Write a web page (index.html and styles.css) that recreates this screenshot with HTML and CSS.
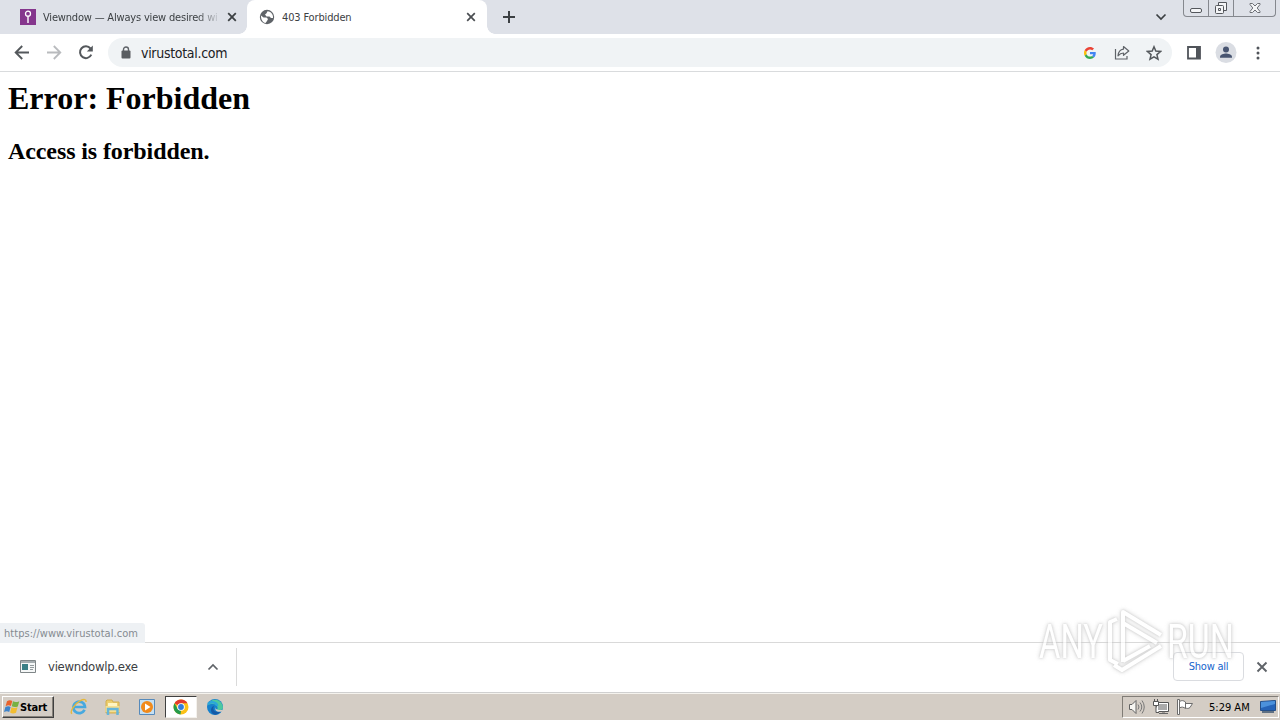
FILE: index.html
```html
<!DOCTYPE html>
<html lang="en">
<head>
<meta charset="UTF-8">
<title>403 Forbidden</title>
<link rel="stylesheet" href="styles.css">
</head>
<body>
<div class="screen">
    <div class="tabstrip">
        <div class="tab">
            <svg class="favicon" width="16" height="16"><path fill="#85368d" d="M0 0h16v16H0z"/><circle cx="8" cy="4.7" r="2.5" fill="none" stroke="#fff" stroke-width="1.3"/><path stroke="#fff" stroke-width="1.4" d="M8 7v7"/></svg>
            <span class="tab-title fade"><span class="t1">Viewndow — Always view desired wi</span></span>
            <svg class="tab-close" width="10" height="10"><path d="M1.2 1.2l7.6 7.6M8.8 1.2L1.2 8.8" stroke="#3c4043" stroke-width="1.8"/></svg>
        </div>
        <div class="tab active">
            <svg class="favicon" width="16" height="16" viewBox="0 0 16 16"><circle cx="8" cy="8" r="7.2" fill="#5f6368"/><path fill="#fff" d="M2 6.500L4.500 8.500h3l1.500 1.500-1 2-1.500 2C3.800 13.500 1.800 10.500 2 6.500zM8.500 2.200l-1 2L6 5.500l1.500 2h3L12 9h2c.5-3-1.500-6.300-5.500-6.800z"/></svg>
            <span class="tab-title t2">403 Forbidden</span>
            <svg class="tab-close" width="10" height="10"><path d="M1.2 1.2l7.6 7.6M8.8 1.2L1.2 8.8" stroke="#4a4d51" stroke-width="1.7"/></svg>
        </div>
        <svg class="new-tab" width="14" height="14"><path d="M7 1v12M1 7h12" stroke="#3c4043" stroke-width="2"/></svg>
        <svg class="tab-search" width="12" height="8"><path d="M1.5 1.5L6 6l4.5-4.5" fill="none" stroke="#3c4043" stroke-width="1.7"/></svg>
        <div class="window-buttons">
            <span><svg width="14" height="14"><rect x="1.500" y="7.500" width="11" height="4" rx="1.500" fill="#f4f5f7" stroke="#54575c"/></svg></span>
            <span><svg width="14" height="14"><g fill="#f4f5f7" stroke="#54575c"><path d="M4.500 1.500h8v8h-8z"/><rect x="1.500" y="4.500" width="8" height="8" rx="1"/><path d="M4.500 7.500h2v2h-2z"/></g></svg></span>
            <span><svg width="14" height="14"><path d="M2 2.500h2.500L7 5l2.500-2.500H12v1L9.200 7l2.800 3.500v1H9.500L7 9l-2.500 2.500H2v-1L4.800 7 2 3.500z" fill="#f4f5f7" stroke="#6c6f75"/></svg></span>
        </div>
    </div>

    <div class="toolbar">
        <svg class="nav" width="16" height="16"><path d="M15 7.500H2M8.200 1L1.700 7.500l6.500 6.500" fill="none" stroke="#54585c" stroke-width="1.900"/></svg>
        <svg class="nav" width="16" height="16"><path d="M1 7.500h13M7.800 1l6.500 6.500-6.500 6.500" fill="none" stroke="#b9bbbe" stroke-width="1.800"/></svg>
        <svg class="nav" width="16" height="16"><path d="M13.300 9.700A5.900 5.900 0 1 1 12.500 3.500" fill="none" stroke="#54585c" stroke-width="2"/><path d="M14.800 .5v6H8.800z" fill="#54585c"/></svg>
        <div class="omnibox">
            <svg class="lock" width="10" height="13"><path d="M2.500 6V3.500a2.500 2.500 0 0 1 5 0V6" fill="none" stroke="#5f6368" stroke-width="1.400"/><rect x="0.500" y="4.500" width="9" height="8" rx="1" fill="#5a5d61"/></svg>
            <span class="url">virustotal.com</span>
            <svg class="google" width="12" height="12" viewBox="0 0 48 48"><path fill="#EA4335" d="M24 9.500c3.540 0 6.710 1.220 9.210 3.600l6.850-6.850C35.900 2.380 30.470 0 24 0 14.620 0 6.510 5.380 2.560 13.220l7.980 6.190C12.430 13.720 17.740 9.500 24 9.500z"/><path fill="#4285F4" d="M46.980 24.550c0-1.570-.15-3.090-.38-4.550H24v9.020h12.940c-.58 2.960-2.260 5.480-4.780 7.180l7.730 6c4.510-4.180 7.090-10.360 7.090-17.650z"/><path fill="#FBBC05" d="M10.530 28.590c-.48-1.450-.76-2.990-.76-4.590s.27-3.140.76-4.590l-7.980-6.190C.92 16.460 0 20.120 0 24c0 3.880.92 7.540 2.560 10.780l7.970-6.190z"/><path fill="#34A853" d="M24 48c6.480 0 11.930-2.130 15.890-5.810l-7.730-6c-2.150 1.450-4.920 2.300-8.160 2.300-6.260 0-11.570-4.220-13.470-9.910l-7.980 6.190C6.510 42.620 14.620 48 24 48z"/></svg>
            <svg class="share" width="16" height="16"><g fill="none" stroke="#5f6368" stroke-width="1.200"><path d="M1.500 4v10h11.500V11"/><path d="M9.500 1.500l5.300 4.500-5.300 4.300V8C7 8 5.500 9 4 10.800 4.300 7 6.500 4.500 9.500 4.100z" stroke-linejoin="round"/></g></svg>
            <svg class="star" width="16" height="16"><path d="M8 1.800l1.800 4.300 4.700.4-3.600 3.100 1.100 4.600L8 11.800l-4 2.400 1.100-4.600-3.600-3.100 4.700-.4z" fill="none" stroke="#54585c" stroke-width="1.500"/></svg>
        </div>
        <svg class="panel" width="14" height="14"><path d="M1 1h12v11.500H1z" fill="#fff" stroke="#50545a" stroke-width="1.800"/><path d="M9 1H13v11.500H9z" fill="#50545a"/></svg>
        <svg class="avatar" width="22" height="22"><circle cx="11" cy="10.500" r="10.500" fill="#dadde3"/><circle cx="11" cy="7.500" r="3" fill="#485571"/><path d="M5 15.800v-1.200c0-2.200 4-3.200 6-3.200s6 1 6 3.200v1.200z" fill="#485571"/></svg>
        <svg class="menu" width="4" height="14"><g fill="#50545a"><circle cx="2" cy="2" r="1.500"/><circle cx="2" cy="7" r="1.500"/><circle cx="2" cy="12" r="1.500"/></g></svg>
    </div>

    <div class="page">
        <h1>Error: Forbidden</h1>
        <h2>Access is forbidden.</h2>
        <div class="status"><span>https://www.virustotal.com</span></div>
    </div>

    <div class="downloads">
        <div class="download">
            <svg width="16" height="13"><path d="M.5.500h15v12H.500z" fill="#f5f7f7" stroke="#7f8688"/><path d="M1 1h14v2H1z" fill="#a5adb0"/><path d="M2 4h6v6H2z" fill="#397f86"/><path d="M10 5.500h4M10 7.500h4M10 9.500h3" stroke="#929a9d"/></svg>
            <span class="filename">viewndowlp.exe</span>
            <svg class="up" width="12" height="8"><path d="M1.500 6.500L6 2l4.500 4.500" fill="none" stroke="#5f6368" stroke-width="1.700"/></svg>
        </div>
        <div class="show-all"><span>Show all</span></div>
        <svg class="shelf-close" width="12" height="12"><path d="M1.500 1.500l9 9M10.500 1.500l-9 9" stroke="#5f6368" stroke-width="1.900"/></svg>
    </div>

    <div class="taskbar">
        <div class="start">
            <svg width="16" height="16"><path d="M3 2.200C5 .800 6.800 1 8.300 2L6.900 7C5.200 6 3.500 6.200 1.600 7.200z" fill="#e9622c"/><path d="M9 2.300c1.700 1 3.700 1 6.300-.1l-1.500 5.200c-2 1-4.200.900-6-.1z" fill="#78b143"/><path d="M1.400 8c1.900-1 3.500-1.200 5.200-.1L5.200 13C3.700 12 2 12 0 13z" fill="#3e83ca"/><path d="M7.500 8.200c1.800 1 3.700 1.100 6 .1L12 13.700c-2 1-4.200.900-5.900-.2z" fill="#f2bd31"/></svg>
            <b>Start</b>
        </div>
        <div class="task"><svg width="18" height="18"><path d="M14.500 11.800A5.800 5.800 0 1 1 15 9H4" fill="none" stroke="#47a9df" stroke-width="2.700"/><path d="M2 15.800C-.5 14 4 6 10 2.800c4-2.100 6.500-1.600 6 1.200" fill="none" stroke="#e5b83c" stroke-width="1.400"/></svg></div>
        <div class="task"><svg width="18" height="18"><path d="M2 3l1-1h5l1 2h6v11H2z" fill="#edce6d" stroke="#d2ae51"/><path d="M4 5h9v3H4z" fill="#fff5c2"/><path d="M1.500 8h14v6H1.500z" fill="#f4df91"/><path d="M4 17v-6h9.500v6" fill="none" stroke="#65b5d9" stroke-width="2.500"/></svg></div>
        <div class="task"><svg width="18" height="18"><path d="M1.500 1.500h15v15h-15z" fill="#c5e0f3" stroke="#568abb"/><circle cx="9" cy="9" r="6" fill="#f18a1b"/><path d="M7 5.500l5.500 3.500L7 12.500z" fill="#fff"/></svg></div>
        <div class="task current"><svg width="16" height="16"><circle cx="8" cy="8" r="7.500" fill="#fbc116"/><path d="M8 8L1.500 4.250A7.500 7.500 0 0 1 14.500 4.250H8z" fill="#e33b2e"/><path d="M1.500 4.250L4.750 9.900 8 11.750 7.500 15.500A7.500 7.500 0 0 1 1.500 4.250z" fill="#259b4b"/><circle cx="8" cy="8" r="3.800" fill="#fff"/><circle cx="8" cy="8" r="2.900" fill="#327ddb"/></svg></div>
        <div class="task"><svg width="18" height="18"><circle cx="9" cy="9" r="8" fill="#1680cc"/><path d="M1.500 7A8 8 0 0 1 17 9c0 3-3 4-6 3 2-3-1-6-4-6-2 0-4 0-5.500 1z" fill="#4cc8a0"/><path d="M2 6c3-3 9-2 9 2" fill="none" stroke="#2ba5db" stroke-width="2.500"/><path d="M8 8c-2 4 1 7 7 5.500-2 2.500-5 3.500-7 3C4 15 4 9 8 8z" fill="#1459a7"/><path d="M10 9c-1 2 1 3.500 7 3l-1 1.500c-5 1-8-1-6-4.500z" fill="#d4cdc5"/></svg></div>
        <div class="tray">
            <svg class="speaker" width="18" height="16"><path d="M1.500 5.500h2.500l4-4v13l-4-4H1.500z" fill="#f7f6f2" stroke="#626262"/><path d="M10 5.500q2 2.500 0 5M12 3.500q3.500 4.500 0 9M14 1.500q4.500 6.500 0 13" fill="none" stroke="#777"/></svg>
            <svg class="network" width="18" height="16"><path d="M4.500 3.500h12v9h-12z" fill="#fff" stroke="#555"/><path d="M6 5h9v6H6z" fill="#aaa"/><path d="M7 14.500h9M10 13h3" stroke="#666"/><path d="M1.500 2.500h5v4h-5zM2.500 0v3M5.500 0v3M4 7v6.500h3" fill="#fff" stroke="#555"/></svg>
            <svg class="flag" width="18" height="16"><path d="M1.500 .500h2v15h-2z" fill="#fff" stroke="#6c6c6c"/><path d="M3.500 2.500C6 1 7.500 1.500 9.500 3V9.500C7.500 8 5.500 7.500 3.500 9zM9.500 4.500h7L14 8.500c-1.500 1.300-3 1-4.500.500z" fill="#fff" stroke="#6c6c6c"/></svg>
            <span class="clock">5:29 AM</span>
            <svg class="desktop" width="16" height="14"><path d="M.5 1.500L15.500.500v10H.500z" fill="#2563b8" stroke="#254f88"/><path d="M1 2l14-1v3L1 8z" fill="#4b91dc"/><path d="M2 12h12" stroke="#38506c" stroke-width="1.500"/></svg>
        </div>
    </div>

    <svg class="watermark" width="210" height="76">
        <g class="mark-text">
            <text x="9" y="54" textLength="64" lengthAdjust="spacingAndGlyphs">ANY</text>
            <text x="137" y="54" textLength="67" lengthAdjust="spacingAndGlyphs">RUN</text>
        </g>
        <path class="mark-logo" d="M87 15L80 18V56L88 60M93 58V8L131 31M93 19L127 39M84 61L92 66L131 42M93 57L120 42"/>
    </svg>
</div>
</body>
</html>
```
FILE: styles.css
```css
* {
    box-sizing: border-box;
}
body {
    margin: 0;
    font-family: "DejaVu Sans Condensed", "DejaVu Sans", sans-serif;
    font-size: 11px;
    color: #3c4043;
}
svg {
    display: block;
    flex: none;
}
.screen {
    position: relative;
    display: flex;
    flex-direction: column;
    width: 1280px;
    height: 720px;
    overflow: hidden;
    background: #fff;
}
.tabstrip {
    display: flex;
    align-items: center;
    height: 34px;
    background: #dee1e8;
}
.tab {
    display: flex;
    align-items: center;
    width: 247px;
    height: 34px;
    padding: 0 10px 0 20px;
    border-radius: 0 0 8px 0;
}
.tab.active {
    position: relative;
    width: 240px;
    padding: 0 11px 0 12px;
    background: #fff;
    border-radius: 8px 8px 0 0;
}
.tab.active::before,
.tab.active::after {
    content: "";
    position: absolute;
    bottom: 0;
    left: -8px;
    width: 8px;
    height: 8px;
    background: radial-gradient(circle at 0 0, transparent 7.5px, #fff 8px);
}
.tab.active::after {
    left: 100%;
    background: radial-gradient(circle at 100% 0, transparent 7.5px, #fff 8px);
}
.tab-title {
    flex: 1;
    margin-left: 7px;
    overflow: hidden;
    white-space: nowrap;
}
.fade {
    margin-right: 8px;
    -webkit-mask-image: linear-gradient(to right, #000 154px, transparent 178px);
    mask-image: linear-gradient(to right, #000 154px, transparent 178px);
}
.t1 {
    letter-spacing: -0.18px;
}
.t2 {
    letter-spacing: -0.15px;
}
.new-tab {
    margin-left: 15px;
}
.tab-search {
    margin-left: auto;
    margin-right: 16px;
}
.window-buttons {
    display: flex;
    align-self: flex-start;
    width: 93px;
    height: 17px;
    margin-right: 4px;
    border: 1px solid #85888e;
    border-top: 0;
    border-radius: 0 0 4px 4px;
}
.window-buttons span {
    display: flex;
    justify-content: center;
    align-items: center;
    width: 25px;
    border-right: 1px solid #85888e;
}
.window-buttons span:last-child {
    flex: 1;
    border: 0;
}
.toolbar {
    display: flex;
    align-items: center;
    height: 38px;
    padding: 0 20px 0 14px;
    border-bottom: 1px solid #d9dbdd;
}
.nav {
    margin-right: 16px;
}
.omnibox {
    display: flex;
    align-items: center;
    width: 1064px;
    height: 29px;
    margin-left: -2px;
    padding: 0 10px 0 13px;
    background: #f0f3f5;
    border-radius: 15px;
}
.url {
    margin-left: 10px;
    font-size: 14px;
    letter-spacing: -0.3px;
    color: #202124;
}
.google {
    margin-left: auto;
}
.share {
    margin-left: 18px;
}
.star {
    margin-left: 16px;
}
.panel {
    margin-left: 15px;
}
.avatar {
    margin-left: 14px;
}
.menu {
    margin-left: 19px;
}
.page {
    position: relative;
    flex: 1;
    padding: 8px;
    font-family: "Liberation Serif", serif;
    color: #000;
}
h1 {
    margin: 0;
    font-size: 32px;
    line-height: 37px;
}
h2 {
    margin: 21px 0 0;
    font-size: 24px;
    line-height: 27px;
    letter-spacing: -0.1px;
}
.status {
    position: absolute;
    left: 0;
    bottom: -1px;
    width: 145px;
    height: 20px;
    padding-left: 4px;
    background: #eef1f4;
    border-radius: 0 3px 0 0;
    font: 11px/21px "DejaVu Sans Condensed", sans-serif;
    letter-spacing: 0.04px;
    color: #858b91;
}
.downloads {
    display: flex;
    align-items: center;
    height: 51px;
    padding: 0 12px 2px 0;
    border-top: 1px solid #d9d9d9;
    border-bottom: 1px solid #d0d0d0;
}
.download {
    display: flex;
    align-items: center;
    width: 237px;
    height: 38px;
    padding: 0 17px 0 20px;
    border-right: 1px solid #dadada;
}
.filename {
    margin-left: 12px;
    font-size: 13px;
    letter-spacing: -0.28px;
}
.up {
    margin-left: auto;
}
.show-all {
    width: 71px;
    height: 29px;
    margin-left: auto;
    margin-right: 12px;
    border: 1px solid #dadce0;
    border-radius: 4px;
    line-height: 27px;
    text-align: center;
    letter-spacing: -0.25px;
    color: #1765cc;
}
.taskbar {
    display: flex;
    align-items: center;
    height: 27px;
    padding-left: 2px;
    border-top: 1px solid #f5f3ee;
    background: #d4cdc5;
}
.start {
    display: flex;
    align-items: center;
    width: 52px;
    height: 22px;
    margin-right: 9px;
    padding-left: 1px;
    border: 1px solid;
    border-color: #fff #404040 #404040 #fff;
    box-shadow: inset -1px -1px #86817a;
    color: #000;
}
.start b {
    letter-spacing: -0.2px;
}
.task {
    display: flex;
    align-items: center;
    justify-content: center;
    width: 32px;
    height: 22px;
    margin-right: 2px;
}
.task.current {
    background: #fff;
    border: 1px solid;
    border-color: #404040 #f4f1ec #f4f1ec #404040;
}
.tray {
    display: flex;
    align-items: center;
    width: 157px;
    height: 22px;
    margin-left: auto;
    margin-right: 1px;
    padding-left: 5px;
    border: 1px solid;
    border-color: #807c76 #fff #fff #807c76;
}
.network,
.flag {
    margin-left: 6px;
}
.clock {
    margin-left: 15px;
    width: 43px;
    white-space: nowrap;
    letter-spacing: 0;
    color: #000;
}
.desktop {
    margin-left: 8px;
}
.watermark {
    position: absolute;
    left: 1030px;
    top: 604px;
    filter: drop-shadow(0 0 1px #bbb) drop-shadow(0 0 2px #ccc);
    opacity: 0.7;
}
.mark-text {
    font-family: Roboto, sans-serif;
    font-size: 49px;
    fill: #fff;
}
.mark-logo {
    fill: none;
    stroke: #fff;
    stroke-width: 4px;
    stroke-linejoin: round;
}
```
